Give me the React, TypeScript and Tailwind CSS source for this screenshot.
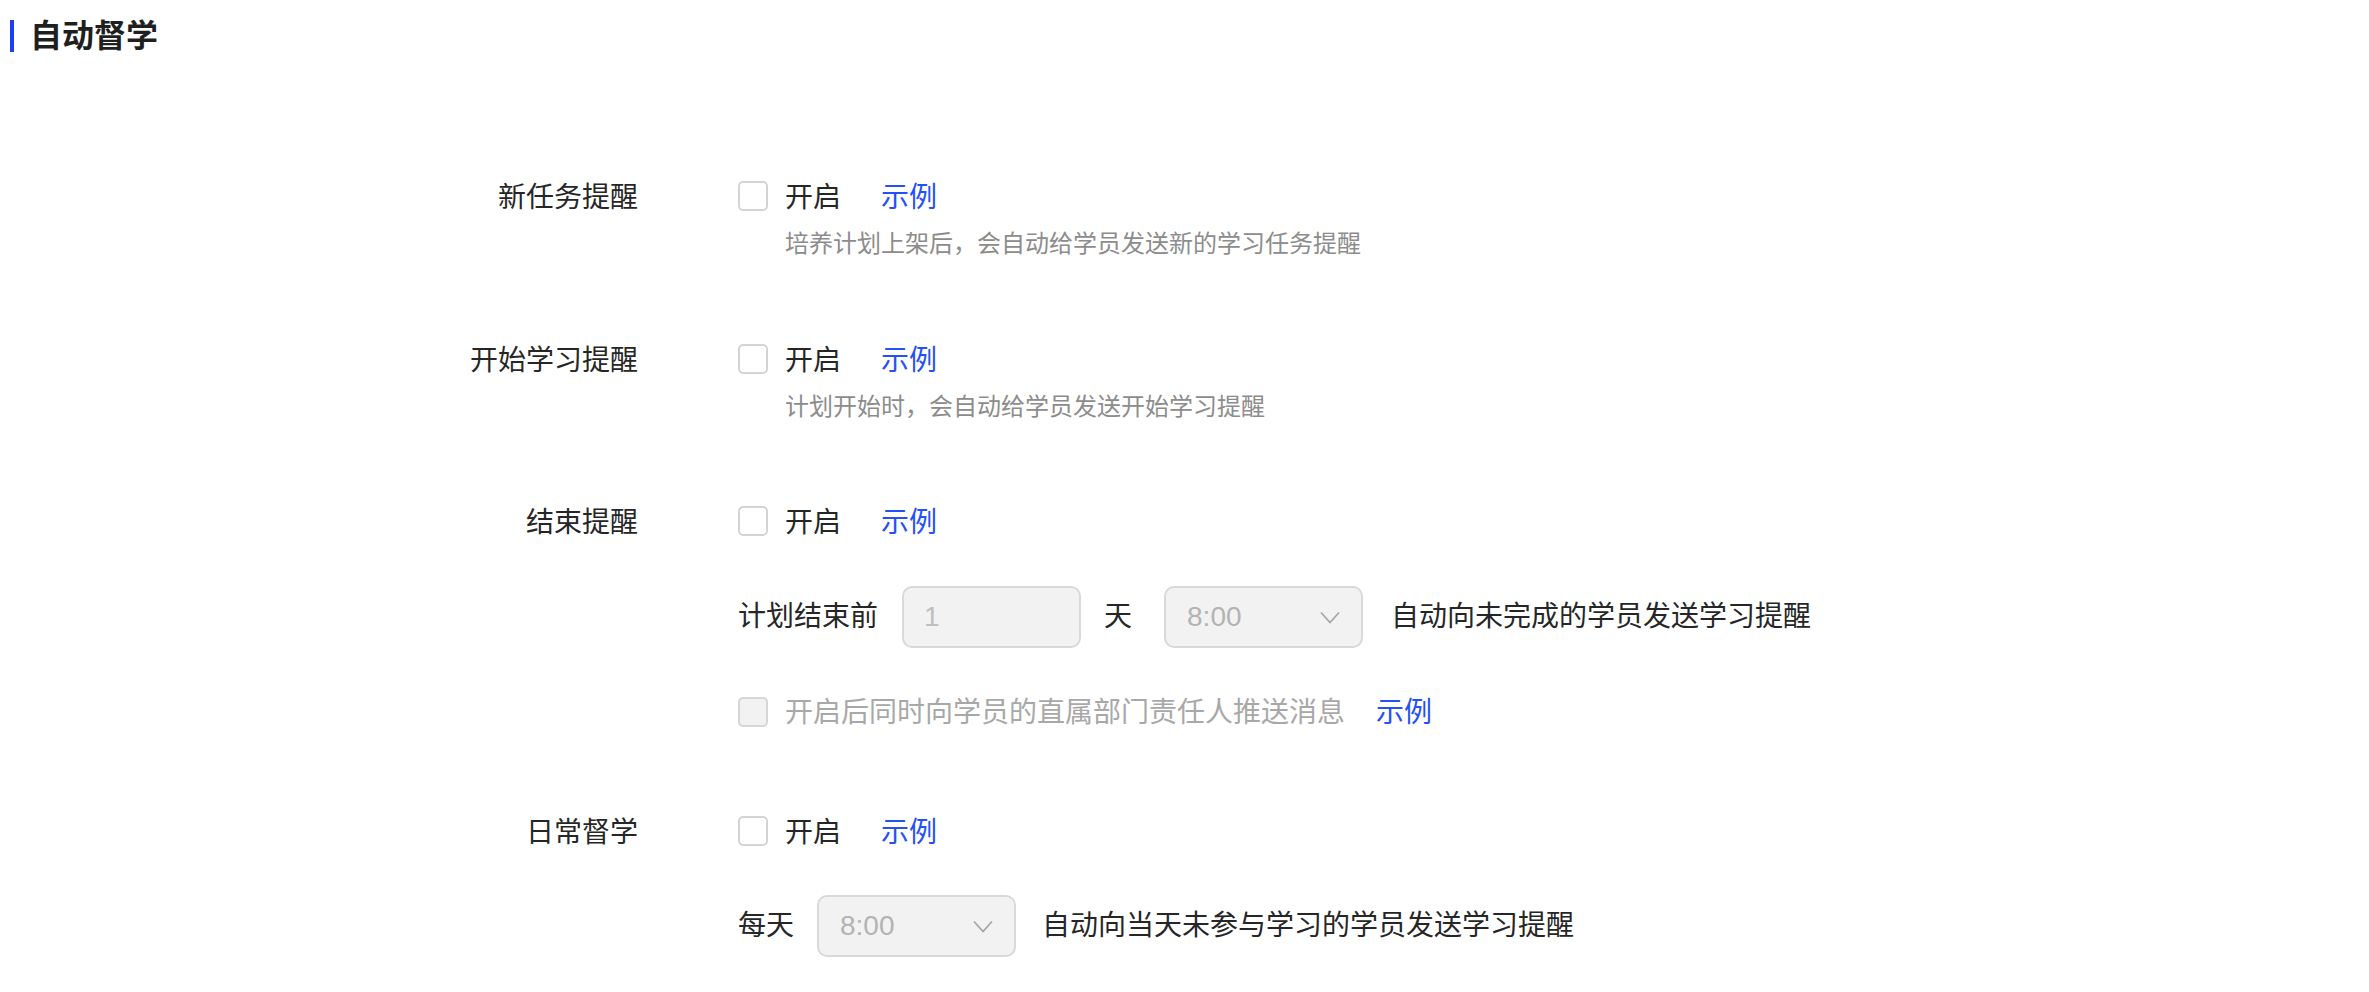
import type { ReactNode } from "react";

const LINK = "text-[#2450f6]";

function Checkbox({ disabled = false }: { disabled?: boolean }) {
  return (
    <span
      className={`block w-[30px] h-[30px] shrink-0 rounded-[5px] border-2 ${
        disabled ? "bg-[#f2f2f2] border-[#d6d6d6]" : "bg-white border-[#d4d4d4]"
      }`}
    />
  );
}

function Chevron() {
  return (
    <svg width="20" height="13" viewBox="0 0 20 13" fill="none">
      <polyline points="1,1.5 10,11.5 19,1.5" stroke="#a3a3a3" strokeWidth="1.6" />
    </svg>
  );
}

function TimeSelect() {
  return (
    <div className="w-[199px] h-[62px] shrink-0 rounded-[10px] border-2 border-[#d9d9d9] bg-[#f2f2f2] flex items-center justify-between pl-[21px] pr-[21px]">
      <span className="text-[28px] text-[#b3b3b3] leading-none">8:00</span>
      <Chevron />
    </div>
  );
}

function SwitchLine() {
  return (
    <div className="h-[40px] flex items-center">
      <Checkbox />
      <span className="ml-[17px] translate-y-[2px] text-[28px] text-[#262626] leading-none">开启</span>
      <span className={`ml-[40px] translate-y-[2px] text-[28px] leading-none ${LINK}`}>示例</span>
    </div>
  );
}

function Desc({ children }: { children: ReactNode }) {
  return (
    <div className="mt-[10px] h-[36px] flex items-center pl-[47px] text-[24px] text-[#8c8c8c] leading-none">
      {children}
    </div>
  );
}

function FormItem({ label, children, className = "" }: { label: string; children: ReactNode; className?: string }) {
  return (
    <div className={`flex ${className}`}>
      <div className="w-[638px] shrink-0 h-[40px] flex items-center justify-end text-[28px] text-[#262626] leading-none">
        <span className="translate-y-[2px]">{label}</span>
      </div>
      <div className="ml-[100px] flex flex-col">{children}</div>
    </div>
  );
}

export default function App() {
  return (
    <div className="w-full min-h-screen bg-white font-['Liberation_Sans','Noto_Sans_CJK_SC',sans-serif]">
      {/* Header */}
      <div className="pt-[20px] flex items-center h-[52px]">
        <span className="ml-[10px] w-[4px] h-[32px] bg-[#1c3ef5]" />
        <h1 className="ml-[16px] text-[32px] font-bold text-[#1f1f1f] leading-none">自动督学</h1>
      </div>

      <div className="mt-[124px] flex flex-col">
        <FormItem label="新任务提醒">
          <SwitchLine />
          <Desc>培养计划上架后，会自动给学员发送新的学习任务提醒</Desc>
        </FormItem>

        <FormItem label="开始学习提醒" className="mt-[77px]">
          <SwitchLine />
          <Desc>计划开始时，会自动给学员发送开始学习提醒</Desc>
        </FormItem>

        <FormItem label="结束提醒" className="mt-[76px]">
          <SwitchLine />
          <div className="mt-[45px] h-[62px] flex items-center text-[28px] text-[#262626] leading-none">
            <span>计划结束前</span>
            <div className="ml-[24px] w-[179px] h-[62px] shrink-0 rounded-[10px] border-2 border-[#d9d9d9] bg-[#f2f2f2] flex items-center pl-[20px]">
              <span className="text-[28px] text-[#bfbfbf] leading-none">1</span>
            </div>
            <span className="ml-[23px]">天</span>
            <div className="ml-[32px]">
              <TimeSelect />
            </div>
            <span className="ml-[28px]">自动向未完成的学员发送学习提醒</span>
          </div>
          <div className="mt-[44px] h-[40px] flex items-center">
            <Checkbox disabled />
            <span className="ml-[17px] translate-y-[1px] text-[28px] text-[#a8a8a8] leading-none">开启后同时向学员的直属部门责任人推送消息</span>
            <span className={`ml-[31px] translate-y-[1px] text-[28px] leading-none ${LINK}`}>示例</span>
          </div>
        </FormItem>

        <FormItem label="日常督学" className="mt-[79px]">
          <SwitchLine />
          <div className="mt-[44px] h-[62px] flex items-center text-[28px] text-[#262626] leading-none">
            <span>每天</span>
            <div className="ml-[23px]">
              <TimeSelect />
            </div>
            <span className="ml-[26px]">自动向当天未参与学习的学员发送学习提醒</span>
          </div>
        </FormItem>
      </div>
    </div>
  );
}
